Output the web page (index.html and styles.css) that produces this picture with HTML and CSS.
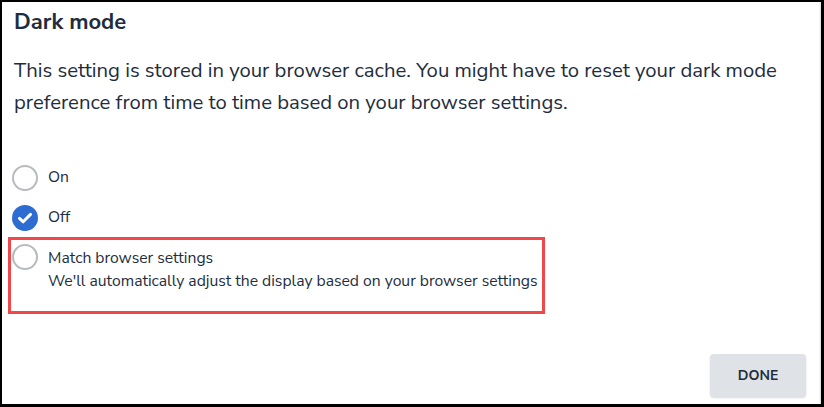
FILE: index.html
```html
<!DOCTYPE html>
<html>
<head>
<meta charset="utf-8">
<link rel="stylesheet" href="styles.css">
</head>
<body>
<div class="frame">
  <div class="dialog">
    <h1 class="title">Dark mode</h1>
    <p class="desc">This setting is stored in your browser cache. You might have to reset your dark mode preference from time to time based on your browser settings.</p>
    <div class="options">
      <div class="option">
        <span class="radio"></span>
        <div class="label">On</div>
      </div>
      <div class="option">
        <span class="radio checked">
          <svg width="26" height="26" viewBox="0 0 26 26"><circle cx="13" cy="13" r="13" fill="#2d6cd0"/><path d="M7.5 13.3 L11.2 16.8 L18.5 9.4" fill="none" stroke="#fff" stroke-width="3" stroke-linecap="round" stroke-linejoin="round"/></svg>
        </span>
        <div class="label">Off</div>
      </div>
      <div class="option highlight">
        <span class="radio"></span>
        <div class="label">
          <div>Match browser settings</div>
          <div class="sub">We'll automatically adjust the display based on your browser settings</div>
        </div>
      </div>
    </div>
    <div class="footer">
      <button class="done">DONE</button>
    </div>
  </div>
</div>
</body>
</html>
```
FILE: styles.css
```css
html, body {
  margin: 0;
  padding: 0;
  background: #000;
}
.frame {
  width: 824px;
  height: 407px;
  box-sizing: border-box;
  padding: 2px 3px 3px 2px;
  background: #000;
}
.dialog {
  height: 100%;
  background: #fff;
  box-sizing: border-box;
  padding: 5px 15px 0 10px;
  font-family: "Nunito Sans", Lato, "Open Sans", sans-serif;
  color: #1e2d3d;
  display: flex;
  flex-direction: column;
  box-shadow: inset -2px 0 2px -1px #ddd;
}
.title {
  margin: 0 0 0 2px;
  font-size: 22px;
  font-weight: 700;
  line-height: 30px;
}
.desc {
  margin: 17px 0 0 2px;
  font-size: 20.3px;
  line-height: 32px;
}
.options {
  margin-top: 47px;
  display: flex;
  flex-direction: column;
  gap: 14px;
}
.option {
  display: flex;
  align-items: flex-start;
  gap: 10px;
  font-size: 15.7px;
  line-height: 23px;
}
.radio {
  width: 26px;
  height: 26px;
  box-sizing: border-box;
  border: 2px solid #b7bbbf;
  border-radius: 50%;
  flex: none;
}
.radio.checked {
  border: none;
}
.radio svg { display: block; }
.label { padding-top: 1px; }
.highlight {
  margin-left: -4px;
  width: 537px;
  box-sizing: border-box;
  border: 3px solid #f04848;
  padding: 6px 0 18px 1px;
  margin-top: -8px;
}
.highlight .radio { margin-top: -2px; }
.footer {
  margin-top: auto;
  display: flex;
  justify-content: flex-end;
  padding-bottom: 7px;
}
.done {
  width: 96px;
  height: 43px;
  border: none;
  border-radius: 4px;
  background: #dfe2e6;
  color: #1e2d3d;
  font-family: "Nunito Sans", Lato, "Open Sans", sans-serif;
  font-weight: 700;
  font-size: 14px;
  box-shadow: 0 1px 2px rgba(0,0,0,0.15);
}
```
